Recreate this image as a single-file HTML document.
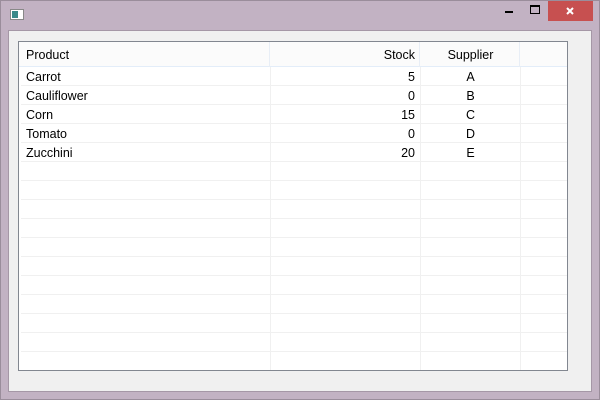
<!DOCTYPE html><html><head><style>
*{margin:0;padding:0;box-sizing:border-box}
body{width:600px;height:400px;background:#c2b2c3;position:relative;overflow:hidden;font-family:"Liberation Sans",sans-serif;font-size:12.5px;color:#000}
.frame{position:absolute;left:0;top:0;width:600px;height:400px;border:1px solid #9a8d9b}
.client{position:absolute;left:8px;top:30px;width:584px;height:362px;background:#f0f0f0;border:1px solid #a597a6}
.tbl{position:absolute;left:18px;top:41px;width:550px;height:330px;background:#fff;border:1px solid #828790}
.hdr{position:absolute;left:0;top:0;width:548px;height:25px;background:#fbfbfb;border-bottom:1px solid #e3edf9}
.vl{position:absolute;width:1px;background:#f0f0f0}
.hl{position:absolute;left:2px;width:546px;height:1px;background:#f0f0f0}
.t{position:absolute;line-height:14px}
.close{position:absolute;left:548px;top:1px;width:45px;height:20px;background:#c75050}
</style></head><body>
<div class="frame"></div>
<div style="position:absolute;left:10px;top:9px;width:14px;height:11px;border:1px solid #888;background:#fff"><div style="position:absolute;left:1px;top:1px;width:6px;height:7px;background:#3a8a8a"></div></div>
<div style="position:absolute;left:505px;top:11px;width:8px;height:2px;background:#000"></div>
<div style="position:absolute;left:530px;top:5px;width:10px;height:9px;border:1px solid #000;border-top-width:2px"></div>
<div class="close"><svg width="45" height="20"><path d="M19 7L25 13M25 7L19 13" stroke="#fff" stroke-width="2"/></svg></div>
<div class="client"></div>
<div class="tbl">
<div class="hdr"></div>
<div class="vl" style="left:250px;top:0;height:25px;background:#e8eef6"></div>
<div class="vl" style="left:400px;top:0;height:25px;background:#e8eef6"></div>
<div class="vl" style="left:500px;top:0;height:25px;background:#e8eef6"></div>
<div class="vl" style="left:251px;top:25px;height:303px"></div>
<div class="vl" style="left:401px;top:25px;height:303px"></div>
<div class="vl" style="left:501px;top:25px;height:303px"></div>
<div class="hl" style="top:43px"></div><div class="hl" style="top:62px"></div><div class="hl" style="top:81px"></div><div class="hl" style="top:100px"></div><div class="hl" style="top:119px"></div><div class="hl" style="top:138px"></div><div class="hl" style="top:157px"></div><div class="hl" style="top:176px"></div><div class="hl" style="top:195px"></div><div class="hl" style="top:214px"></div><div class="hl" style="top:233px"></div><div class="hl" style="top:252px"></div><div class="hl" style="top:271px"></div><div class="hl" style="top:290px"></div><div class="hl" style="top:309px"></div>
<div class="t" style="left:7px;top:6px">Product</div>
<div class="t" style="left:300px;width:96px;text-align:right;top:6px">Stock</div>
<div class="t" style="left:402px;width:99px;text-align:center;top:6px">Supplier</div>
<div class="t" style="left:7px;top:28px">Carrot</div>
<div class="t" style="left:7px;top:47px">Cauliflower</div>
<div class="t" style="left:7px;top:66px">Corn</div>
<div class="t" style="left:7px;top:85px">Tomato</div>
<div class="t" style="left:7px;top:104px">Zucchini</div>
<div class="t" style="left:300px;width:96px;text-align:right;top:28px">5</div>
<div class="t" style="left:300px;width:96px;text-align:right;top:47px">0</div>
<div class="t" style="left:300px;width:96px;text-align:right;top:66px">15</div>
<div class="t" style="left:300px;width:96px;text-align:right;top:85px">0</div>
<div class="t" style="left:300px;width:96px;text-align:right;top:104px">20</div>
<div class="t" style="left:402px;width:99px;text-align:center;top:28px">A</div>
<div class="t" style="left:402px;width:99px;text-align:center;top:47px">B</div>
<div class="t" style="left:402px;width:99px;text-align:center;top:66px">C</div>
<div class="t" style="left:402px;width:99px;text-align:center;top:85px">D</div>
<div class="t" style="left:402px;width:99px;text-align:center;top:104px">E</div>
</div>
</body></html>
